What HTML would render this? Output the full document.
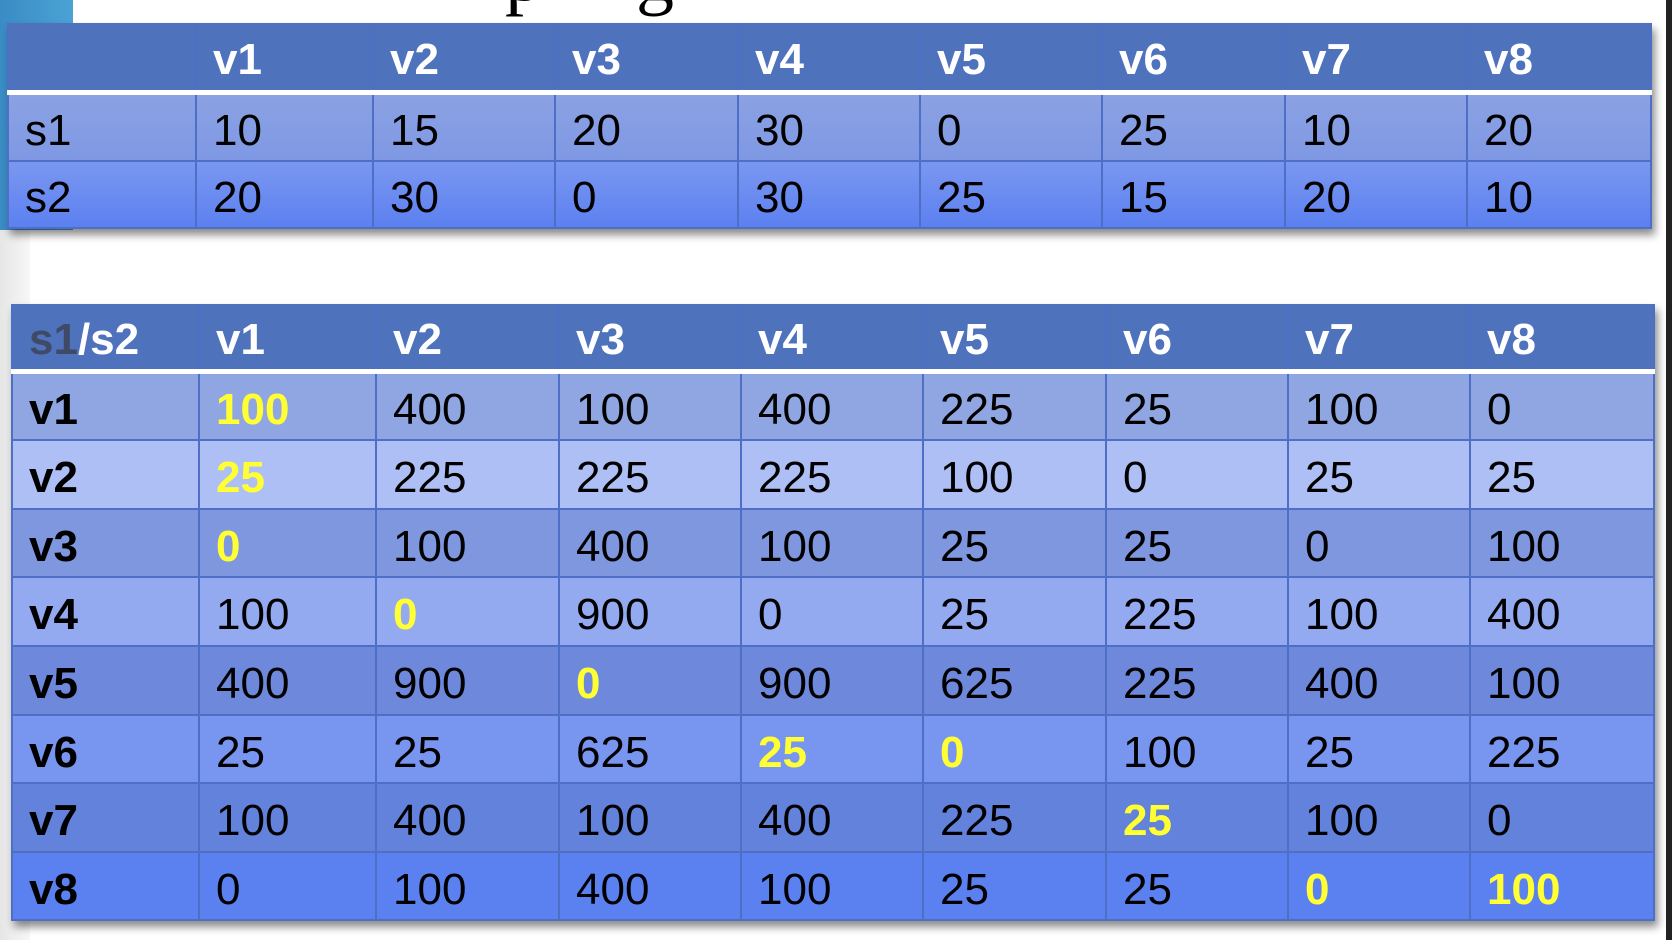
<!DOCTYPE html>
<html><head><meta charset="utf-8"><style>
html,body{margin:0;padding:0;width:1672px;height:940px;overflow:hidden;background:#fff;position:relative;font-family:"Liberation Sans",sans-serif}
.lbar{position:absolute;left:0;top:0;width:73px;height:230px;background:linear-gradient(90deg,#3a8cc4,#4aa3d4)}
.gray{position:absolute;left:0;top:230px;width:30px;height:710px;background:linear-gradient(90deg,#e6e6e6,#f7f7f7)}
.rbar{position:absolute;left:1666px;top:0;width:6px;height:940px;background:#222}
.title{position:absolute;top:-68px;font-family:"Liberation Serif",serif;font-size:76px;color:#000}
table{position:absolute;border-collapse:collapse;table-layout:fixed;box-shadow:3px 6px 8px rgba(0,0,0,.45)}
td{border:2px solid #4d70c6;padding:7px 0 0 16px;font-size:44px;color:#000;vertical-align:middle;white-space:nowrap;overflow:hidden;line-height:1}
tr.h td{color:#fff;font-weight:bold;background:#4f72bd;border-bottom:5px solid #fff;border-top:none}
.b td:first-child{font-weight:bold}
.y{color:#ffff33;font-weight:bold}
.g{color:#3e4a66}
</style></head><body>
<div class="lbar"></div><div class="gray"></div><div class="rbar"></div>
<div class="title" style="left:505px">p</div><div class="title" style="left:636px">g</div>
<table style="left:7px;top:23px;width:1643px">
<colgroup><col style="width:188px"><col style="width:177px"><col style="width:182px"><col style="width:183px"><col style="width:182px"><col style="width:182px"><col style="width:183px"><col style="width:182px"><col style="width:184px"></colgroup>
<tr class="h" style="height:69px"><td></td><td>v1</td><td>v2</td><td>v3</td><td>v4</td><td>v5</td><td>v6</td><td>v7</td><td>v8</td></tr>
<tr style="height:69px;background:linear-gradient(#8ba2e2,#7f98e4)"><td>s1</td><td>10</td><td>15</td><td>20</td><td>30</td><td>0</td><td>25</td><td>10</td><td>20</td></tr>
<tr style="height:67px;background:linear-gradient(#7b97f0,#5b80f0)"><td>s2</td><td>20</td><td>30</td><td>0</td><td>30</td><td>25</td><td>15</td><td>20</td><td>10</td></tr>
</table>
<table class="b" style="left:11px;top:304px;width:1642px">
<colgroup><col style="width:187px"><col style="width:177px"><col style="width:183px"><col style="width:182px"><col style="width:182px"><col style="width:183px"><col style="width:182px"><col style="width:182px"><col style="width:184px"></colgroup>
<tr class="h" style="height:67px"><td><span class="g">s1</span>/s2</td><td>v1</td><td>v2</td><td>v3</td><td>v4</td><td>v5</td><td>v6</td><td>v7</td><td>v8</td></tr>
<tr style="height:69px;background:#90a6e2"><td>v1</td><td class="y">100</td><td>400</td><td>100</td><td>400</td><td>225</td><td>25</td><td>100</td><td>0</td></tr>
<tr style="height:69px;background:#adbff4"><td>v2</td><td class="y">25</td><td>225</td><td>225</td><td>225</td><td>100</td><td>0</td><td>25</td><td>25</td></tr>
<tr style="height:68px;background:#7f97de"><td>v3</td><td class="y">0</td><td>100</td><td>400</td><td>100</td><td>25</td><td>25</td><td>0</td><td>100</td></tr>
<tr style="height:69px;background:#93aaf0"><td>v4</td><td>100</td><td class="y">0</td><td>900</td><td>0</td><td>25</td><td>225</td><td>100</td><td>400</td></tr>
<tr style="height:69px;background:#6e89dc"><td>v5</td><td>400</td><td>900</td><td class="y">0</td><td>900</td><td>625</td><td>225</td><td>400</td><td>100</td></tr>
<tr style="height:68px;background:#7895ef"><td>v6</td><td>25</td><td>25</td><td>625</td><td class="y">25</td><td class="y">0</td><td>100</td><td>25</td><td>225</td></tr>
<tr style="height:69px;background:#6382dc"><td>v7</td><td>100</td><td>400</td><td>100</td><td>400</td><td>225</td><td class="y">25</td><td>100</td><td>0</td></tr>
<tr style="height:68px;background:#5b80f0"><td>v8</td><td>0</td><td>100</td><td>400</td><td>100</td><td>25</td><td>25</td><td class="y">0</td><td class="y">100</td></tr>
</table>
</body></html>
